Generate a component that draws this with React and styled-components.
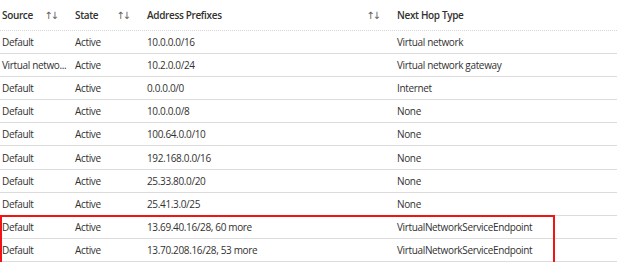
import React from "react";
import styled, { createGlobalStyle } from "styled-components";

const routes = [
  ["Default", "Active", "10.0.0.0/16", "Virtual network"],
  ["Virtual netwo...", "Active", "10.2.0.0/24", "Virtual network gateway"],
  ["Default", "Active", "0.0.0.0/0", "Internet"],
  ["Default", "Active", "10.0.0.0/8", "None"],
  ["Default", "Active", "100.64.0.0/10", "None"],
  ["Default", "Active", "192.168.0.0/16", "None"],
  ["Default", "Active", "25.33.80.0/20", "None"],
  ["Default", "Active", "25.41.3.0/25", "None"],
  ["Default", "Active", "13.69.40.16/28, 60 more", "VirtualNetworkServiceEndpoint"],
  ["Default", "Active", "13.70.208.16/28, 53 more", "VirtualNetworkServiceEndpoint"],
];

const Global = createGlobalStyle`
  body {
    margin: 0;
    background: #fff;
    font-family: "Open Sans", "Noto Sans", sans-serif;
    color: #323130;
  }
`;

const Table = styled.div`
  position: relative;
  width: 617px;
`;

const Row = styled.div`
  display: grid;
  grid-template-columns: 73px 72px 250px 1fr;
  height: ${(p) => (p.$head ? "30px" : "22.1px")};
  align-items: center;
  border-bottom: 1px ${(p) => (p.$head ? "dotted #d6d6d6" : "solid #dcdcdc")};
  font-size: 10px;
  letter-spacing: -0.35px;
  font-weight: ${(p) => (p.$head ? 600 : 400)};
`;

const Cell = styled.div`
  display: flex;
  align-items: center;
  justify-content: space-between;
  padding: 0 14px 0 2px;
  white-space: nowrap;
  overflow: hidden;
`;

const Sort = styled.span`
  font-family: "DejaVu Sans", sans-serif;
  font-size: 10px;
  font-weight: 400;
  color: #605e5c;
  letter-spacing: -2px;
  padding-right: 2px;
`;

const Highlight = styled.div`
  position: absolute;
  left: 0;
  top: 215px;
  width: 551px;
  height: 48px;
  border: 2px solid #f01414;
  pointer-events: none;
`;

export default function App() {
  return (
    <>
      <Global />
      <Table>
        <Row $head>
          <Cell>
            Source <Sort>↑↓</Sort>
          </Cell>
          <Cell>
            State <Sort>↑↓</Sort>
          </Cell>
          <Cell>
            Address Prefixes <Sort>↑↓</Sort>
          </Cell>
          <Cell>Next Hop Type</Cell>
        </Row>
        {routes.map((r, i) => (
          <Row key={i}>
            {r.map((c, j) => (
              <Cell key={j}>{c}</Cell>
            ))}
          </Row>
        ))}
        <Highlight />
      </Table>
    </>
  );
}
